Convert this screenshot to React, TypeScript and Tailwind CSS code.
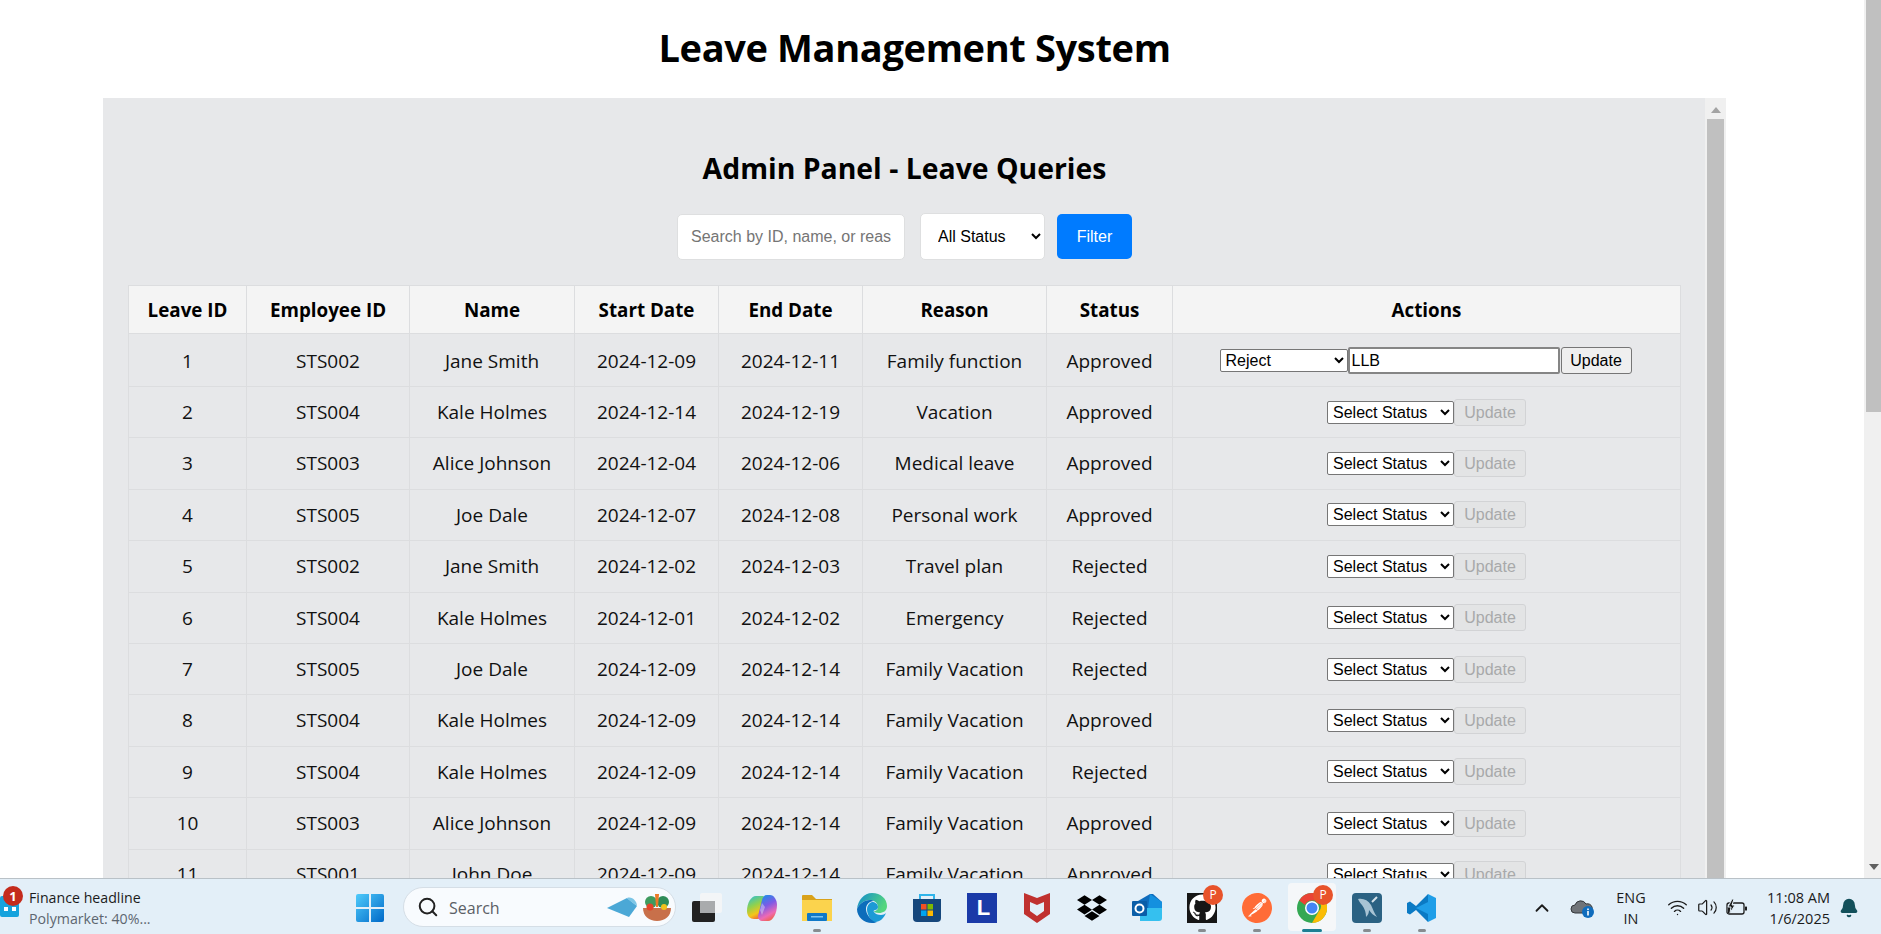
import { Bell, ChevronUp, Search, Volume2, Wifi } from "lucide-react";
import type { ReactNode } from "react";
import { FaDropbox, FaGithub } from "react-icons/fa";
import { SiPostman } from "react-icons/si";

const leaves = [
  [1, "STS002", "Jane Smith", "2024-12-09", "2024-12-11", "Family function", "Approved"],
  [2, "STS004", "Kale Holmes", "2024-12-14", "2024-12-19", "Vacation", "Approved"],
  [3, "STS003", "Alice Johnson", "2024-12-04", "2024-12-06", "Medical leave", "Approved"],
  [4, "STS005", "Joe Dale", "2024-12-07", "2024-12-08", "Personal work", "Approved"],
  [5, "STS002", "Jane Smith", "2024-12-02", "2024-12-03", "Travel plan", "Rejected"],
  [6, "STS004", "Kale Holmes", "2024-12-01", "2024-12-02", "Emergency", "Rejected"],
  [7, "STS005", "Joe Dale", "2024-12-09", "2024-12-14", "Family Vacation", "Rejected"],
  [8, "STS004", "Kale Holmes", "2024-12-09", "2024-12-14", "Family Vacation", "Approved"],
  [9, "STS004", "Kale Holmes", "2024-12-09", "2024-12-14", "Family Vacation", "Rejected"],
  [10, "STS003", "Alice Johnson", "2024-12-09", "2024-12-14", "Family Vacation", "Approved"],
  [11, "STS001", "John Doe", "2024-12-09", "2024-12-14", "Family Vacation", "Approved"],
];

const headers = ["Leave ID", "Employee ID", "Name", "Start Date", "End Date", "Reason", "Status", "Actions"];

function RowActions({ editing }: { editing: boolean }) {
  if (editing) {
    return (
      <div className="flex items-center justify-center pr-[2px] font-['Liberation_Sans',sans-serif] text-base text-black">
        <select defaultValue="Reject" className="h-[23px] w-[128px] rounded-[2px] border border-[#767676] bg-white pl-[1px]">
          <option>Reject</option>
        </select>
        <input defaultValue="LLB" className="h-[27px] w-[212px] rounded-[2px] border-2 border-[#858585] bg-white px-[2px]" />
        <button className="ml-[1px] h-[27px] w-[71px] rounded-[3px] border border-[#767676] bg-[#efefef] pt-[1px]">Update</button>
      </div>
    );
  }
  return (
    <div className="flex items-center justify-center font-['Liberation_Sans',sans-serif] text-base text-black">
      <select className="h-[23px] w-[127px] rounded-[2px] border border-[#767676] bg-white pl-[1px]">
        <option>Select Status</option>
      </select>
      <button disabled className="h-[27px] w-[72px] rounded-[3px] border border-[#d2d3d5] bg-[#e3e4e5] pt-[1px] text-[#a8a9aa]">
        Update
      </button>
    </div>
  );
}

function LeaveTable() {
  return (
    <table className="w-[1552px] table-fixed border-collapse text-center text-[19px] text-[#111]">
      <colgroup>
        <col className="w-[118px]" />
        <col className="w-[163px]" />
        <col className="w-[165px]" />
        <col className="w-[144px]" />
        <col className="w-[144px]" />
        <col className="w-[184px]" />
        <col className="w-[126px]" />
        <col className="w-[508px]" />
      </colgroup>
      <thead>
        <tr className="h-[48px] bg-[#f4f4f4]">
          {headers.map((h) => (
            <th key={h} className="border border-[#dcdddf] p-0 pt-[2px] text-[18.8px] font-bold text-black">
              {h}
            </th>
          ))}
        </tr>
      </thead>
      <tbody>
        {leaves.map((row, i) => (
          <tr key={row[0]} className={i === 0 ? "h-[53px]" : "h-[51.4px]"}>
            {row.map((cell, j) => (
              <td key={j} className={i === 0 ? "border border-[#dcdddf] p-0 pt-[2px]" : "border border-[#dcdddf] p-0"}>
                {cell}
              </td>
            ))}
            <td className={i === 0 ? "border border-[#dcdddf] p-0 pt-[1px]" : "border border-[#dcdddf] p-0"}>
              <RowActions editing={i === 0} />
            </td>
          </tr>
        ))}
      </tbody>
    </table>
  );
}

function AdminPanel() {
  return (
    <section className="ml-[103px] flex h-[780px] w-[1623px] overflow-hidden bg-[#e7e8ea]">
      <div className="min-w-0 flex-1 pl-[25px] pt-[50px]">
        <h2 className="ml-px h-[40px] w-[1551px] text-center text-[28.4px] font-bold leading-[40px] text-black">
          Admin Panel - Leave Queries
        </h2>
        <div className="mb-[25px] ml-px mt-[25px] flex h-[47px] w-[1551px] items-center justify-center font-['Liberation_Sans',sans-serif] text-base">
          <input
            placeholder="Search by ID, name, or reason..."
            className="h-[46px] w-[228px] rounded-[5px] border border-[#dedfe0] bg-white px-[13px] placeholder:text-[#757575]"
          />
          <select className="ml-[15px] h-[47px] w-[125px] rounded-[5px] border border-[#dedfe0] bg-white pl-[13px] text-black">
            <option>All Status</option>
          </select>
          <button className="ml-[12px] h-[45px] w-[75px] rounded-[5px] bg-[#007bff] text-white">Filter</button>
        </div>
        <LeaveTable />
      </div>
      <div className="flex w-[21px] flex-col items-center bg-[#f0f0f0]">
        <div className="mt-[9px] h-0 w-0 border-x-[5px] border-b-[6px] border-x-transparent border-b-[#a3a3a3]" />
        <div className="mt-[6px] h-[760px] w-[17px] bg-[#c0c0c0]" />
      </div>
    </section>
  );
}

function PageScrollbar() {
  return (
    <div className="flex w-[17px] flex-col items-end bg-[#f0f0f0]">
      <div className="h-[412px] w-[15px] bg-[#c0c0c0]" />
      <div className="mr-[2px] mt-[452px] h-0 w-0 border-x-[5px] border-t-[6px] border-x-transparent border-t-[#606060]" />
    </div>
  );
}

function WindowsLogo() {
  return (
    <svg viewBox="0 0 30 30" className="mt-[2px] h-[30px] w-[30px]">
      <defs>
        <linearGradient id="win" x1="0" y1="0" x2="1" y2="1">
          <stop offset="0" stopColor="#4fcbfb" />
          <stop offset="1" stopColor="#0069c8" />
        </linearGradient>
      </defs>
      <path fill="url(#win)" d="M1 3a2 2 0 0 1 2-2h11v13H1zM16 1h11a2 2 0 0 1 2 2v11H16zM1 16h13v13H3a2 2 0 0 1-2-2zM16 16h13v11a2 2 0 0 1-2 2H16z" />
    </svg>
  );
}

function TaskView() {
  return (
    <svg viewBox="0 0 30 30" className="h-[30px] w-[30px]">
      <rect x="0" y="8" width="23" height="21" rx="2" fill="#222" />
      <rect x="8" y="0" width="22" height="20" rx="2" fill="#f4f5f6" fillOpacity="0.9" />
      <rect x="8" y="8" width="15" height="12" fill="#a9abad" />
    </svg>
  );
}

function Copilot() {
  return (
    <svg viewBox="0 0 30 30" className="h-[30px] w-[30px]">
      <defs>
        <linearGradient id="cpl" x1="0.2" y1="0" x2="0.6" y2="1">
          <stop offset="0" stopColor="#35c1c9" />
          <stop offset="0.4" stopColor="#8fd14f" />
          <stop offset="0.75" stopColor="#f5c518" />
          <stop offset="1" stopColor="#f0623d" />
        </linearGradient>
        <linearGradient id="cpr" x1="0.3" y1="0" x2="0.7" y2="1">
          <stop offset="0" stopColor="#1e8fe8" />
          <stop offset="0.4" stopColor="#7d5ae6" />
          <stop offset="0.75" stopColor="#ee6ab4" />
          <stop offset="1" stopColor="#f0623d" />
        </linearGradient>
      </defs>
      <path fill="url(#cpl)" d="M9 3C4 3 0 10 0 18c0 5 3 8 7 8h3c3 0 4-2 5-5l4-14c0-3-2-4-4-4z" />
      <path fill="url(#cpr)" d="M21 28c5 0 9-8 9-16 0-5-3-10-7-10h-3c-3 0-4 2-5 5l-4 16c0 3 2 5 4 5z" />
      <path fill="#f4f4f8" fillOpacity="0.4" d="M15 10l3 4-3 8-2-5z" />
    </svg>
  );
}

function Folder() {
  return (
    <svg viewBox="0 0 30 30" className="h-[30px] w-[30px]">
      <path fill="#d9a21b" d="M0 3a1 1 0 0 1 1-1h9l4 4h16v6H0z" />
      <path fill="#fbd34d" d="M0 7h30v21H0z" />
      <rect x="5" y="20" width="20" height="8" rx="1" fill="#0f78c8" />
      <rect x="9" y="23" width="12" height="1.5" fill="#7cc4f2" />
    </svg>
  );
}

function Edge() {
  return (
    <svg viewBox="0 0 30 30" className="h-[30px] w-[30px]">
      <defs>
        <linearGradient id="ed1" x1="0" y1="0" x2="1" y2="0.4">
          <stop offset="0" stopColor="#0f8ad1" />
          <stop offset="1" stopColor="#54d67e" />
        </linearGradient>
      </defs>
      <path fill="url(#ed1)" d="M15 0c9 0 15 6 15 13 0 5-4 7-8 7-3 0-5-1-5-2 3 0 4-2 4-4 0-4-4-7-8-7-6 0-11 4-13 9C1 7 7 0 15 0z" />
      <path fill="#0d6dbb" d="M0 16c2-5 7-9 13-9 2 0 3 .5 4 1-5 0-8 4-8 8 0 5 4 10 9 12 1 .5 2 1 2 1-2 1-4 1-5 1C7 30 0 24 0 16z" />
      <path fill="#1c9ad6" d="M10 16c0-3 2-6 5-7 3 0 6 2 6 5 0 1-1 3-3 3-1 0-2 1-1 2 1 2 4 3 7 3 2 0 4-1 5-2-2 5-6 9-11 9-5-2-8-8-8-13z" />
    </svg>
  );
}

function Store() {
  return (
    <svg viewBox="0 0 30 30" className="h-[30px] w-[30px]">
      <path fill="none" stroke="#2fb4ea" strokeWidth="2" d="M8 7V2h14v5" />
      <path fill="#16477c" d="M1 6h28v19a4 4 0 0 1-4 4H5a4 4 0 0 1-4-4z" />
      <rect x="9" y="11" width="5.5" height="5.5" fill="#f25022" />
      <rect x="15.5" y="11" width="5.5" height="5.5" fill="#7fba00" />
      <rect x="9" y="17.5" width="5.5" height="5.5" fill="#00a4ef" />
      <rect x="15.5" y="17.5" width="5.5" height="5.5" fill="#ffb900" />
    </svg>
  );
}

function LTile() {
  return (
    <div className="flex h-[30px] w-[30px] items-center justify-center bg-[#1a3aa8] pl-[3px] font-['Liberation_Sans',sans-serif] text-[22px] font-bold leading-none text-white">
      L
    </div>
  );
}

function McAfee() {
  return (
    <svg viewBox="0 0 30 30" className="h-[30px] w-[30px]">
      <path fill="#c0312f" fillRule="evenodd" d="M2 0l13 5 13-5v21l-13 9-13-9zM8 9v9l7 5 7-5V9l-7 3z" />
    </svg>
  );
}

function Outlook() {
  return (
    <svg viewBox="0 0 30 30" className="h-[30px] w-[30px]">
      <path fill="#0f6cbd" d="M6 8l12-7h3l9 8v6H6z" />
      <path fill="#35c0ef" d="M8 15h22v10a3 3 0 0 1-3 3H8z" />
      <path fill="#1490df" d="M18 1l12 8v6H16z" />
      <rect x="0" y="8" width="15" height="15" rx="1" fill="#0a5ea8" />
      <circle cx="7.5" cy="15.5" r="4" fill="none" stroke="#fff" strokeWidth="2" />
    </svg>
  );
}

function GithubTile() {
  return (
    <div className="flex h-[30px] w-[30px] items-center justify-center bg-[#161616]">
      <FaGithub className="h-[27px] w-[27px] text-white" />
    </div>
  );
}

function PostmanLogo() {
  return (
    <div className="flex h-[30px] w-[30px] items-center justify-center rounded-full bg-white">
      <SiPostman className="h-[30px] w-[30px] text-[#ff6c37]" />
    </div>
  );
}

function Chrome() {
  return (
    <svg viewBox="0 0 30 30" className="h-[30px] w-[30px]">
      <circle cx="15" cy="15" r="15" fill="#34a853" />
      <path fill="#ea4335" d="M15 0a15 15 0 0 1 13 7.5H15a7.5 7.5 0 0 0-7 4.6L2.2 7.4A15 15 0 0 1 15 0z" />
      <path fill="#fbbc05" d="M28 7.5A15 15 0 0 1 15 30l6.5-11.2a7.5 7.5 0 0 0 0-11.3z" />
      <circle cx="15" cy="15" r="7" fill="#fff" />
      <circle cx="15" cy="15" r="5.5" fill="#4285f4" />
    </svg>
  );
}

function MysqlTile() {
  return (
    <svg viewBox="0 0 30 30" className="h-[30px] w-[30px]">
      <rect width="30" height="30" rx="4" fill="#2b6283" />
      <path fill="#a9c4d4" d="M6 6c5-1 10 1 13 6 2 4 3 8 6 12-4-2-6-4-8-7 0 3-1 5-3 7 0-4-1-8-4-12-2-2-3-4-4-6z" />
      <path stroke="#d5e2ea" strokeWidth="2" d="M20 9l5-5" />
    </svg>
  );
}

function VsCode() {
  return (
    <svg viewBox="0 0 30 30" className="h-[30px] w-[30px]">
      <path fill="#0b7ac4" d="M21 1L9 13 3 8.5 0 10v10l3 1.5 6-4.5 12 12z" />
      <path fill="#1f9ee8" d="M21 1l8 4v20l-8 4V9l-12 6 12 6z" />
    </svg>
  );
}

function PBadge() {
  return (
    <span className="absolute right-[-6px] top-[-8px] flex h-[20px] w-[20px] items-center justify-center rounded-full bg-[#e8532b] text-[12px] leading-none text-white">
      P
    </span>
  );
}

function TrayIcon({ children, dot, active }: { children: ReactNode; dot?: boolean; active?: boolean }) {
  return (
    <div className="relative h-[30px] w-[30px]">
      {active && <div className="absolute left-[-9px] top-[-10px] h-[48px] w-[48px] rounded-[4px] bg-[#f5f7f9]" />}
      <div className="relative h-[30px] w-[30px]">{children}</div>
      {dot && <div className="absolute left-[11px] top-[36px] h-[3px] w-[8px] rounded-full bg-[#878c90]" />}
      {active && <div className="absolute left-[5px] top-[36px] h-[3px] w-[20px] rounded-full bg-[#1c7f93]" />}
    </div>
  );
}

function NewsWidget() {
  return (
    <div className="relative flex h-full w-[355px] shrink-0 flex-col pl-[29px] pt-[8px] text-[14.2px] leading-[21px]">
      <div className="absolute left-0 top-[17px] flex h-[21px] w-[19px] items-center justify-center rounded-[2px] bg-[#16a3dd]">
        <div className="mt-[4px] h-[4px] w-[12px] border-x-[4px] border-white" />
      </div>
      <span className="absolute left-[3px] top-[7px] flex h-[20px] w-[20px] items-center justify-center rounded-full bg-[#c42b1c] text-[13px] font-bold leading-none text-white">
        1
      </span>
      <span className="text-[#1b1b1b]">Finance headline</span>
      <span className="text-[#5d6670]">Polymarket: 40%...</span>
    </div>
  );
}

function SearchPill() {
  return (
    <div className="ml-[18px] flex h-[40px] w-[273px] shrink-0 items-center rounded-full border border-[#d5dee6] bg-[#f8fbfe] pl-[13px]">
      <Search size={22} strokeWidth={2.2} className="text-[#222]" />
      <span className="ml-[10px] flex-1 pt-[2px] text-[16px] text-[#5b6066]">Search</span>
      <svg viewBox="0 0 66 30" className="mr-[2px] h-[30px] w-[66px]">
        <path fill="#4ba8d6" d="M0 16L20 6l10 8-8 11z" />
        <path fill="#7cc6e6" d="M20 6c5-2 10 3 10 8-3-3-8-5-10-8z" />
        <path fill="#c8704a" d="M36 16h28c0 8-6 13-14 13s-14-5-14-13z" />
        <circle cx="44" cy="10" r="6" fill="#3e9b5f" />
        <circle cx="56" cy="10" r="6" fill="#2f8c58" />
        <circle cx="43" cy="15" r="3.5" fill="#e3442a" />
        <circle cx="57" cy="15" r="3" fill="#f2c21c" />
        <path fill="#ec7a26" d="M48 2l4 0-1 13h-2z" />
      </svg>
    </div>
  );
}

function CloudInfo() {
  return (
    <svg viewBox="0 0 24 20" className="ml-[17px] h-[20px] w-[24px]">
      <path fill="#6f7378" stroke="#33363a" strokeWidth="1" d="M5 15a4 4 0 0 1 0-8 6 6 0 0 1 11-1 4 4 0 0 1 3 9z" />
      <circle cx="18" cy="14" r="6" fill="#0f6cbd" />
      <rect x="17.2" y="13" width="1.6" height="4.5" fill="#fff" />
      <rect x="17.2" y="10.5" width="1.6" height="1.6" fill="#fff" />
    </svg>
  );
}

function BatteryIcon() {
  return (
    <svg viewBox="0 0 24 20" className="ml-[7px] h-[20px] w-[24px]">
      <rect x="2" y="5" width="17" height="11" rx="2" fill="none" stroke="#1b1b1b" strokeWidth="1.3" />
      <rect x="20" y="8.5" width="2" height="4" rx="0.6" fill="#1b1b1b" />
      <path fill="#1b1b1b" d="M3 15V9l3-1v7z" />
      <path fill="#1b1b1b" stroke="#e3eff8" strokeWidth="1" d="M7 1L3 9h3l-1 6 5-8H7l2-6z" />
    </svg>
  );
}

function SystemTray() {
  return (
    <div className="mt-[2px] flex h-full items-center text-[#1b1b1b]">
      <ChevronUp size={22} strokeWidth={2} className="ml-[94px]" />
      <CloudInfo />
      <div className="ml-[18px] flex w-[38px] flex-col items-center text-[14.4px] leading-[21px]">
        <span>ENG</span>
        <span>IN</span>
      </div>
      <Wifi size={21} strokeWidth={1.6} className="ml-[17px]" />
      <Volume2 size={21} strokeWidth={1.4} className="ml-[9px]" />
      <BatteryIcon />
      <div className="ml-[18px] flex w-[63px] flex-col items-end text-[14.5px] leading-[21px]">
        <span>11:08 AM</span>
        <span>1/6/2025</span>
      </div>
      <Bell size={20} strokeWidth={2} fill="#13505b" className="ml-[9px] text-[#13505b]" />
    </div>
  );
}

function Taskbar() {
  return (
    <footer className="relative flex h-[56px] shrink-0 items-center border-t border-[#b9c1c7] bg-[#e3eff8]">
      <NewsWidget />
      <WindowsLogo />
      <SearchPill />
      <div className="ml-[16px] mt-[2px] flex shrink-0 gap-[25px]">
        <TrayIcon><TaskView /></TrayIcon>
        <TrayIcon><Copilot /></TrayIcon>
        <TrayIcon dot><Folder /></TrayIcon>
        <TrayIcon><Edge /></TrayIcon>
        <TrayIcon><Store /></TrayIcon>
        <TrayIcon><LTile /></TrayIcon>
        <TrayIcon><McAfee /></TrayIcon>
        <TrayIcon><FaDropbox className="h-[30px] w-[30px] text-black" /></TrayIcon>
        <TrayIcon><Outlook /></TrayIcon>
        <TrayIcon dot><GithubTile /><PBadge /></TrayIcon>
        <TrayIcon dot><PostmanLogo /></TrayIcon>
        <TrayIcon active><Chrome /><PBadge /></TrayIcon>
        <TrayIcon dot><MysqlTile /></TrayIcon>
        <TrayIcon dot><VsCode /></TrayIcon>
      </div>
      <SystemTray />
    </footer>
  );
}

export default function App() {
  return (
    <div className="flex h-[934px] flex-col overflow-hidden bg-white font-['Open_Sans',sans-serif]">
      <div className="flex min-h-0 flex-1">
        <main className="min-w-0 flex-1">
          <h1 className="h-[98px] w-[1829px] text-center text-[38px] font-bold leading-[94px] tracking-[-0.35px] text-black">
            Leave Management System
          </h1>
          <AdminPanel />
        </main>
        <PageScrollbar />
      </div>
      <Taskbar />
    </div>
  );
}
